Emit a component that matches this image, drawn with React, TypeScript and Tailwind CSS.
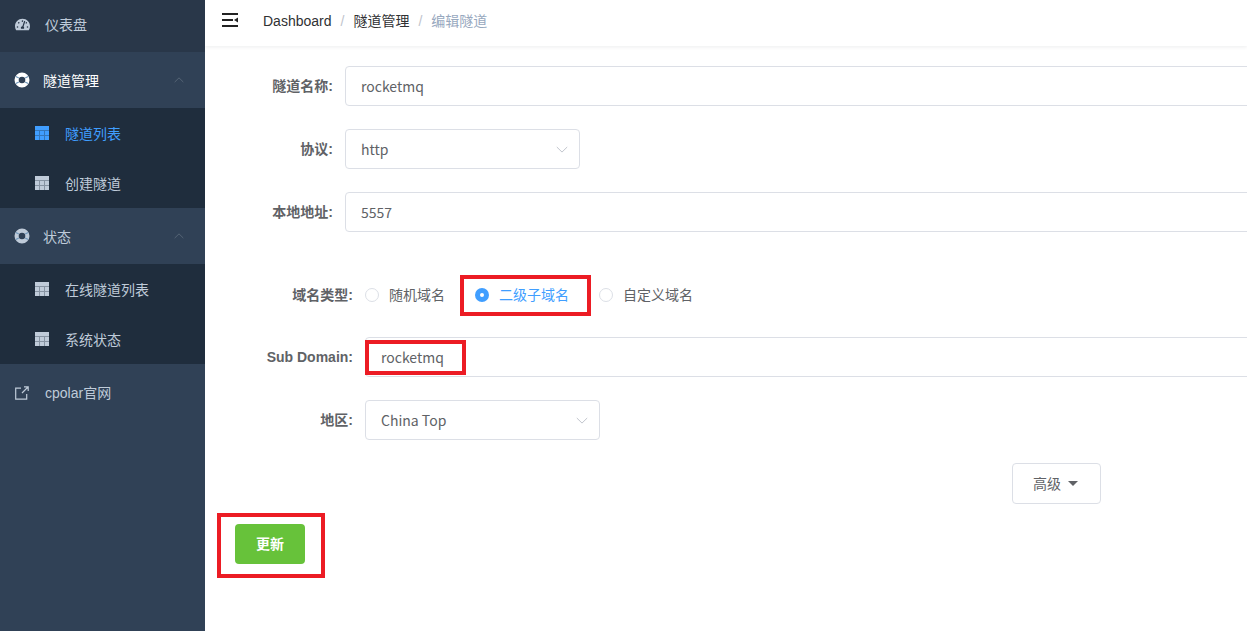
import React from 'react';
import { FaTachometerAlt } from 'react-icons/fa';

const cjk = '"Liberation Sans", "Noto Sans CJK SC", sans-serif';
const inputFont = '"Noto Sans CJK SC", sans-serif';

const RingIcon = ({ className }: { className?: string }) => (
  <svg viewBox="0 0 16 16" className={className} fill="none">
    <circle cx="8" cy="8" r="5.4" stroke="currentColor" strokeWidth="4.2" />
    <path d="M1.8 4.4 4.8 6.1M14.2 4.4 11.2 6.1M1.8 11.6 4.8 9.9M14.2 11.6 11.2 9.9" stroke="#6f97bb" strokeWidth="1.1" />
  </svg>
);

const GridIcon = ({ className, line }: { className?: string; line: string }) => (
  <svg viewBox="0 0 14 14" className={className} fill="currentColor">
    <rect width="14" height="14" />
    <g fill={line} opacity="0.35">
      <rect x="0" y="4" width="14" height="1" />
      <rect x="0" y="9" width="14" height="1" />
      <rect x="4" y="5" width="1" height="9" />
      <rect x="9" y="5" width="1" height="9" />
    </g>
  </svg>
);

const LinkIcon = ({ className }: { className?: string }) => (
  <svg viewBox="0 0 14 14" className={className} fill="none" stroke="currentColor" strokeWidth="1.2">
    <path d="M6 2.2H.7v11h11V8M7 7l6-6M9 .8h4.2V5" />
  </svg>
);

const MenuFoldIcon = () => (
  <svg viewBox="0 0 16 14" className="w-4 h-[14px] text-[#222]" fill="currentColor">
    <rect x="0" y="0" width="16" height="2" />
    <rect x="0" y="6" width="11" height="2" />
    <rect x="0" y="12" width="16" height="2" />
    <path d="M12 7 16 4.4v5.2z" />
  </svg>
);

const Chevron = ({ className }: { className?: string }) => (
  <svg viewBox="0 0 12 7" className={className} fill="none" stroke="currentColor" strokeWidth="1">
    <path d="M.8 6 6 .9 11.2 6" />
  </svg>
);

const TopItem = ({ icon, label, h, bg }: { icon: React.ReactNode; label: string; h: string; bg: string }) => (
  <div className={`flex items-center pl-[15px] text-sm text-[#bfcbd9] ${h} ${bg}`}>
    <span className="w-[30px] flex items-center">{icon}</span>
    {label}
  </div>
);

const Group = ({ label, active }: { label: string; active?: boolean }) => (
  <div className="flex items-center h-14 pl-[14px] pr-[21px] bg-[#304156]">
    <RingIcon className={`w-4 h-4 ${active ? 'text-white' : 'text-[#bfcbd9]'}`} />
    <span className={`ml-[13px] pt-[2px] flex-1 text-sm ${active ? 'text-white' : 'text-[#bfcbd9]'}`}>{label}</span>
    <Chevron className="w-[10px] h-[6px] text-[#5d6b7c]" />
  </div>
);

const SubItem = ({ label, active }: { label: string; active?: boolean }) => (
  <div className={`flex items-center h-[50px] pl-[35px] text-sm ${active ? 'text-[#409eff]' : 'text-[#bfcbd9]'}`}>
    <GridIcon className="w-[14px] h-[14px]" line="#1f2d3d" />
    <span className="ml-4 pt-[1px]">{label}</span>
  </div>
);

const Sidebar = () => (
  <aside className="w-[205px] shrink-0 h-full bg-[#304156]" style={{ fontFamily: cjk }}>
    <TopItem
      icon={<FaTachometerAlt className="w-[15px] h-[15px] text-[#bfcbd9]" />}
      label="仪表盘"
      h="h-[52px] pb-[3px]"
      bg="bg-[#293749]"
    />
    <Group label="隧道管理" active />
    <div className="bg-[#1f2d3d]">
      <SubItem label="隧道列表" active />
      <SubItem label="创建隧道" />
    </div>
    <Group label="状态" />
    <div className="bg-[#1f2d3d]">
      <SubItem label="在线隧道列表" />
      <SubItem label="系统状态" />
    </div>
    <TopItem
      icon={<LinkIcon className="w-[14px] h-[14px] text-[#bfcbd9]" />}
      label="cpolar官网"
      h="h-[56px] pt-[1px]"
      bg="bg-[#304156]"
    />
  </aside>
);

const Label = ({ text, wide }: { text: string; wide?: boolean }) => (
  <label className={`shrink-0 text-right pr-3 text-sm font-bold text-[#606266] ${wide ? 'w-[160px]' : 'w-[140px]'}`}>{text}</label>
);

const Field = ({ value, select }: { value: string; select?: boolean }) => (
  <div
    className={`flex items-center h-10 pl-[15px] pr-[11px] rounded border border-[#dcdfe6] bg-white text-sm text-[#606266] ${select ? 'w-[235px]' : 'flex-1'}`}
    style={{ fontFamily: inputFont }}
  >
    <span className="flex-1">{value}</span>
    {select && <Chevron className="w-[12px] h-[7px] rotate-180 text-[#c0c4cc]" />}
  </div>
);

const Radio = ({ label, checked }: { label: string; checked?: boolean }) => (
  <div className={`flex items-center text-sm ${checked ? 'text-[#409eff]' : 'text-[#606266]'}`}>
    {checked ? (
      <span className="w-[14px] h-[14px] rounded-full bg-[#409eff] flex items-center justify-center">
        <span className="w-1 h-1 rounded-full bg-white" />
      </span>
    ) : (
      <span className="w-[14px] h-[14px] rounded-full border border-[#dcdfe6] bg-white" />
    )}
    <span className="ml-[10px]">{label}</span>
  </div>
);

export default function App() {
  return (
    <div className="flex w-[1247px] h-[631px] overflow-hidden bg-white" style={{ fontFamily: cjk }}>
      <Sidebar />
      <main className="flex-1 min-w-0 overflow-hidden">
        <header className="flex items-center h-[46px] pb-[6px] pl-[17px] bg-white shadow-[0_1px_4px_rgba(0,21,41,0.08)]">
          <MenuFoldIcon />
          <nav className="flex items-center ml-[25px] mt-[2px] text-sm">
            <span className="text-[#303133]">Dashboard</span>
            <span className="mx-[9px] text-[#c0c4cc]">/</span>
            <span className="text-[#303133]">隧道管理</span>
            <span className="mx-[9px] text-[#c0c4cc]">/</span>
            <span className="text-[#97a8be]">编辑隧道</span>
          </nav>
        </header>

        <div className="relative w-[1100px] pt-[20px]">
          <div className="flex items-center">
            <Label text="隧道名称:" />
            <Field value="rocketmq" />
          </div>
          <div className="flex items-center mt-[23px]">
            <Label text="协议:" />
            <Field value="http" select />
          </div>
          <div className="flex items-center mt-[23px]">
            <Label text="本地地址:" />
            <Field value="5557" />
          </div>

          <div className="flex items-center mt-[43px] h-[40px]">
            <Label text="域名类型:" wide />
            <div className="flex items-center gap-[30px]">
              <Radio label="随机域名" />
              <Radio label="二级子域名" checked />
              <Radio label="自定义域名" />
            </div>
          </div>
          <div className="flex items-center mt-[22px]">
            <Label text="Sub Domain:" wide />
            <Field value="rocketmq" />
          </div>
          <div className="flex items-center mt-[23px]">
            <Label text="地区:" wide />
            <Field value="China Top" select />
          </div>

          <div className="flex mt-[23px] pl-[807px]">
            <button className="flex items-center justify-center w-[89px] h-[41px] pr-[2px] rounded border border-[#dcdfe6] bg-white text-sm text-[#606266]">
              高级
              <span className="ml-[7px] w-0 h-0 border-x-[5px] border-x-transparent border-t-[5px] border-t-[#606266]" />
            </button>
          </div>

          <div className="mt-[20px] pl-[30px]">
            <button className="w-[70px] h-10 rounded bg-[#67c23a] text-sm font-bold text-white">更新</button>
          </div>

          {/* red annotation boxes drawn over the form */}
          <div className="absolute left-[255px] top-[229px] w-[131px] h-[41px] border-[4px] border-[#ec1c24]" />
          <div className="absolute left-[160px] top-[294px] w-[101px] h-[35px] border-[4px] border-[#ec1c24]" />
          <div className="absolute left-[12px] top-[467px] w-[108px] h-[65px] border-[4px] border-[#ec1c24]" />
        </div>
      </main>
    </div>
  );
}
